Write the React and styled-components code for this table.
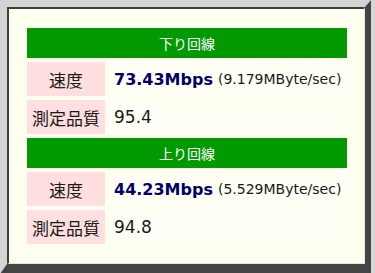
import { Fragment } from 'react';
import styled, { createGlobalStyle } from 'styled-components';

const GlobalStyle = createGlobalStyle`
  html, body {
    margin: 0;
    padding: 0;
    background: #d6d6d6;
  }
`;

// raised frame: light top/left, dark bottom/right, with a sunken inner edge
const Frame = styled.div`
  width: 371px;
  box-sizing: border-box;
  border-style: solid;
  border-width: 7px 6px 10px 7px;
  border-color: #d4d4d4 #444 #444 #d4d4d4;
`;

const Panel = styled.div`
  border-style: solid;
  border-width: 2px 1px 1px 2px;
  border-color: #3f3f3f #e6e6e6 #e6e6e6 #3f3f3f;
  background: #fffff0;
  padding: 19px 17px 19px 18px;
`;

const ResultGrid = styled.div`
  display: grid;
  grid-template-columns: 78px 238px;
  grid-template-rows: repeat(2, 30px 34px 34px);
  gap: 4px;
`;

const Heading = styled.div`
  grid-column: 1 / -1;
  display: flex;
  align-items: center;
  justify-content: center;
  background: #009900;
  color: #fff;
  font-family: "Noto Sans CJK JP", "DejaVu Sans", sans-serif;
  font-size: 14px;
`;

const Label = styled.div`
  display: flex;
  align-items: center;
  justify-content: center;
  background: #ffdfdf;
  color: #1a1a1a;
  font-family: "Noto Sans CJK JP", sans-serif;
  font-size: 17px;
`;

const Value = styled.div`
  display: flex;
  align-items: center;
  padding-left: 5px;
  background: #fffff6;
  color: #1a1a1a;
  font-family: "DejaVu Sans", Verdana, sans-serif;
  font-size: 17px;
  white-space: nowrap;
`;

const Speed = styled.b`
  color: #000066;
  font-size: 16px;
  margin-right: 5px;
`;

const Note = styled.span`
  font-size: 14px;
  color: #1a1a1a;
`;

const lines = [
  { title: '下り回線', mbps: '73.43', bytes: '9.179', quality: '95.4' },
  { title: '上り回線', mbps: '44.23', bytes: '5.529', quality: '94.8' },
];

export default function App() {
  return (
    <>
      <GlobalStyle />
      <Frame>
        <Panel>
          <ResultGrid>
            {lines.map((l) => (
              <Fragment key={l.title}>
                <Heading>{l.title}</Heading>
                <Label>速度</Label>
                <Value>
                  <Speed>{l.mbps}Mbps</Speed>
                  <Note>({l.bytes}MByte/sec)</Note>
                </Value>
                <Label>測定品質</Label>
                <Value>{l.quality}</Value>
              </Fragment>
            ))}
          </ResultGrid>
        </Panel>
      </Frame>
    </>
  );
}
